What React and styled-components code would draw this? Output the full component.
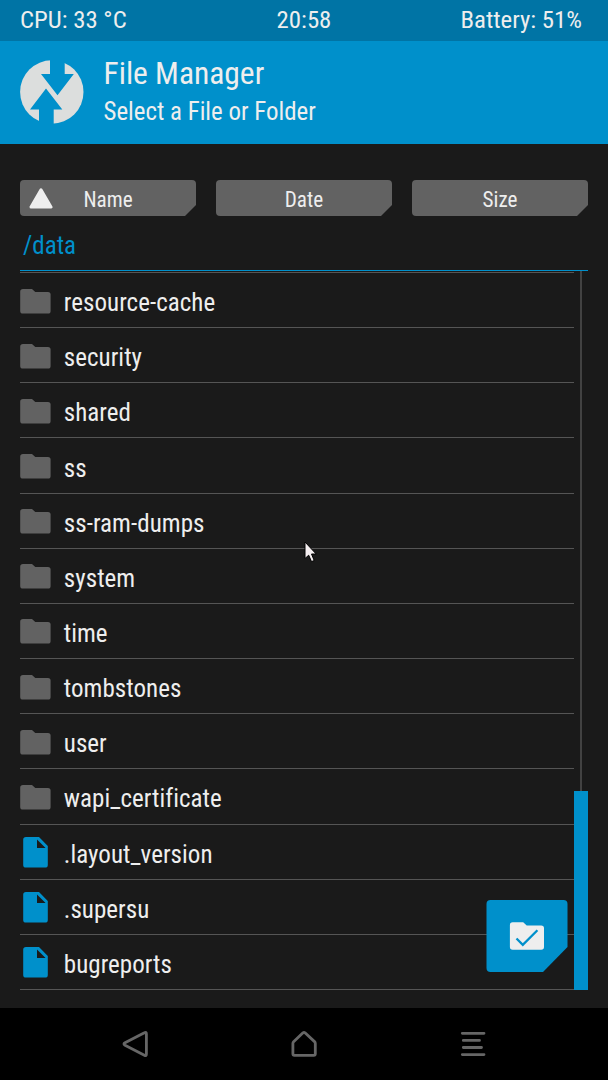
import React from "react";
import styled, { createGlobalStyle } from "styled-components";

const entries = [
    { name: "resource-cache", type: "folder" },
    { name: "security", type: "folder" },
    { name: "shared", type: "folder" },
    { name: "ss", type: "folder" },
    { name: "ss-ram-dumps", type: "folder" },
    { name: "system", type: "folder" },
    { name: "time", type: "folder" },
    { name: "tombstones", type: "folder" },
    { name: "user", type: "folder" },
    { name: "wapi_certificate", type: "folder" },
    { name: ".layout_version", type: "file" },
    { name: ".supersu", type: "file" },
    { name: "bugreports", type: "file" },
];

const FolderIcon = () => (
    <svg width="31" height="25" viewBox="0 0 31 25">
        <path fill="#626262" d="M3 0H12L15.3 3H28Q30.6 3 30.6 5.6V21.9Q30.6 24.5 28 24.5H3Q.2 24.5 .2 21.9V2.6Q.2 0 3 0Z" />
    </svg>
);

const FileIcon = () => (
    <svg width="25" height="31" viewBox="0 0 25 31">
        <path fill="#0090cb" fillRule="evenodd" d="M3 0H16L24.8 9V28Q24.8 30.6 22 30.6H3Q.2 30.6 .2 28V2.6Q.2 0 3 0ZM14 2.4V11H22.6Z" />
    </svg>
);

const App = () => {
    return (
        <Screen>
            <GlobalStyle />
            <StatusBar>
                <span>CPU: 33 °C</span>
                <span>20:58</span>
                <span>Battery: 51%</span>
            </StatusBar>
            <Header>
                <svg width="64" height="64" viewBox="0 0 64 64">
                    <circle cx="31.8" cy="32" r="31.7" fill="#dcdedd" />
                    <path fill="#0090cb" d="M30 -1V14H21L37.5 35.2L53.8 14H44.7V-1Z" />
                    <path fill="#0090cb" d="M19 65V49.5H10L26 28.5L42.3 49.5H33.7V65Z" />
                </svg>
                <Titles>
                    <Title>File Manager</Title>
                    <Subtitle>Select a File or Folder</Subtitle>
                </Titles>
            </Header>
            <SortRow>
                {["Name", "Date", "Size"].map((label) => (
                    <SortButton key={label}>
                        {label === "Name" && (
                            <SortArrow width="24" height="21" viewBox="0 0 24 21">
                                <path fill="#eee" stroke="#eee" strokeWidth="3" strokeLinejoin="round" d="M12 1.8L22 19H2Z" />
                            </SortArrow>
                        )}
                        {label}
                    </SortButton>
                ))}
            </SortRow>
            <PathBar>/data</PathBar>
            <Browser>
                <List>
                    {entries.map(({ name, type }) => (
                        <Row key={name}>
                            <IconSlot $type={type}>{type === "folder" ? <FolderIcon /> : <FileIcon />}</IconSlot>
                            <Name>{name}</Name>
                        </Row>
                    ))}
                </List>
                <ScrollTrack>
                    <ScrollThumb />
                </ScrollTrack>
                <SelectButton>
                    <svg width="82" height="72" viewBox="-.5 0 82 72">
                        <path fill="#0090cb" d="M4 0H77Q81 0 81 4V47L56.5 72H4Q0 72 0 68V4Q0 0 4 0Z" />
                        <path fill="#eee" d="M26.2 22.3H36.7L40.2 25.5H54.7Q57.5 25.5 57.5 28.3V47Q57.5 49.8 54.7 49.8H26.2Q23.4 49.8 23.4 47V25.1Q23.4 22.3 26.2 22.3Z" />
                        <path fill="none" stroke="#0090cb" strokeWidth="2.3" d="M30 38.5L36.3 44.8L50.9 30.2" />
                    </svg>
                </SelectButton>
            </Browser>
            <NavBar>
                <svg width="26" height="28" viewBox="0 0 26 28">
                    <path d="M22.4 2.7Q24.4 1.6 24.4 3.9V24.1Q24.4 26.4 22.4 25.3L3 15.2Q.9 14 3 12.8Z" />
                </svg>
                <svg width="26" height="28" viewBox="0 0 26 28">
                    <path d="M2.6 11.7Q1.9 12.4 1.9 13.5V23.8Q1.9 25.3 3.4 25.3H22.8Q24.3 25.3 24.3 23.8V13.5Q24.3 12.4 23.5 11.6L14 2.8Q13 2 12 2.8Z" />
                </svg>
                <svg width="26" height="28" viewBox="0 0 26 28">
                    <path d="M2.3 3.3H24M3.3 10.4H19.5M3.3 17.5H21.5M2.3 24.6H24" />
                </svg>
            </NavBar>
            <Pointer width="13" height="22" viewBox="0 0 13 22">
                <path fill="#f4eef0" stroke="#000" strokeWidth="1" d="M1 1V17.5L4.7 14.2L7.5 20.6L10.2 19.5L7.5 13H12.2Z" />
            </Pointer>
        </Screen>
    );
};

export default App;

const GlobalStyle = createGlobalStyle`
    body {
        margin: 0;
        background: #1a1a1a;
    }
    svg {
        display: block;
        flex: none;
    }
`;

const Screen = styled.div`
    position: relative;
    display: flex;
    flex-direction: column;
    box-sizing: border-box;
    width: 608px;
    height: 1080px;
    overflow: hidden;
    background: #1a1a1a;
    color: #eee;
    font-family: "Roboto Condensed", Roboto, sans-serif;
    font-stretch: 75%;
    font-size: 25px;
    font-variant-ligatures: none;
    white-space: nowrap;
`;

const StatusBar = styled.div`
    display: grid;
    grid-template-columns: 1fr auto 1fr;
    height: 41px;
    padding: 0 20px;
    box-sizing: border-box;
    font-size: 24.8px;
    line-height: 40px;
    background: #0074a5;
    > :last-child {
        padding-right: 6px;
        text-align: right;
    }
`;

const Header = styled.div`
    display: flex;
    align-items: center;
    gap: 19.5px;
    height: 103px;
    padding: 0 0 1px 20px;
    box-sizing: border-box;
    background: #0090cb;
`;

const Titles = styled.div`
    display: flex;
    flex-direction: column;
`;

const Title = styled.div`
    font-size: 31.5px;
    line-height: 39px;
`;

const Subtitle = styled.div`
    font-size: 24.9px;
    line-height: 38px;
`;

const SortRow = styled.div`
    display: grid;
    grid-template-columns: repeat(3, 1fr);
    gap: 20px;
    margin: 36px 20px 0;
`;

const SortButton = styled.div`
    position: relative;
    height: 36px;
    line-height: 39px;
    font-size: 21.2px;
    text-align: center;
    background: #626262;
    border-radius: 4px;
    clip-path: polygon(0 0, 100% 0, 100% 25px, calc(100% - 11px) 100%, 0 100%);
`;

const SortArrow = styled.svg`
    position: absolute;
    left: 8.5px;
    top: 8px;
`;

const PathBar = styled.div`
    height: 55px;
    margin: 0 20px;
    padding-left: 3px;
    line-height: 60px;
    color: #0090cb;
    border-bottom: 1px solid #0090cb;
    box-sizing: border-box;
`;

const Browser = styled.div`
    position: relative;
    display: flex;
    height: 737px;
    margin: 0 20px;
`;

const List = styled.div`
    width: 554px;
    height: 718px;
    display: grid;
    grid-template-rows: repeat(13, 1fr);
    border-top: 1px solid #555;
    margin-top: 1px;
    box-sizing: border-box;
`;

const Row = styled.div`
    display: flex;
    align-items: center;
    border-bottom: 1px solid #555;
`;

const IconSlot = styled.div`
    display: flex;
    justify-content: center;
    width: 31px;
    margin-right: 12.8px;
    margin-top: ${props => props.$type === 'folder' ? '2px' : '1.5px'};
`;

const Name = styled.div`
    padding-top: 5px;
    letter-spacing: 0.04px;
`;

const ScrollTrack = styled.div`
    display: flex;
    flex-direction: column;
    justify-content: flex-end;
    width: 14px;
    height: 719px;
    background: linear-gradient(#424242, #424242) 6px 0 / 2px 100% no-repeat;
`;

const ScrollThumb = styled.div`
    height: 199px;
    background: #0090cb;
`;

const SelectButton = styled.div`
    position: absolute;
    right: 20px;
    top: 629px;
`;

const NavBar = styled.div`
    display: flex;
    justify-content: center;
    gap: 143px;
    height: 72px;
    padding-top: 22px;
    box-sizing: border-box;
    background: #000;
    path {
        fill: none;
        stroke: #666;
        stroke-width: 2.8;
        stroke-linecap: round;
        stroke-linejoin: round;
    }
`;

const Pointer = styled.svg`
    position: absolute;
    left: 304px;
    top: 541px;
`;
